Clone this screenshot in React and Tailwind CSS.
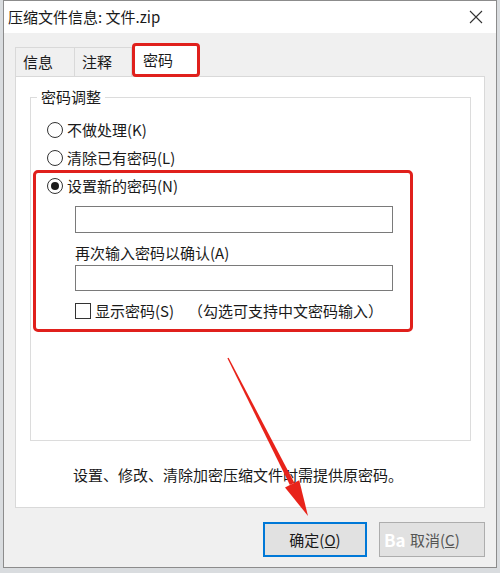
import React from "react";

const Radio = ({ checked, label }) => (
  <div className="flex items-center h-[20px]">
    <span className="w-[16px] h-[16px] rounded-full border border-[#333] bg-white flex items-center justify-center">
      {checked && <span className="w-[8px] h-[8px] rounded-full bg-[#1a1a1a]" />}
    </span>
    <span className="ml-[4px]">{label}</span>
  </div>
);

const App = () => {
  return (
    <div
      className="relative w-[500px] h-[573px] overflow-hidden bg-[#d9dcdf] text-[15px] leading-[20px] text-[#1a1a1a]"
      style={{ fontFamily: '"Noto Sans CJK SC", "Noto Sans", sans-serif' }}
    >
      {/* Window */}
      <div className="ml-[3px] w-[494px] h-[568px] border border-[#8c8c8c] bg-[#f0f0f0] flex flex-col">
        {/* Title bar */}
        <div className="h-[32px] bg-white flex items-center justify-between pl-[4px]">
          <span>压缩文件信息: 文件.zip</span>
          <svg className="mr-[13px]" width="14" height="14" viewBox="0 0 14 14">
            <path d="M1 1 L13 13 M13 1 L1 13" stroke="#333" strokeWidth="1.1" fill="none" />
          </svg>
        </div>

        <div className="px-[11px]">
          {/* Tabs */}
          <div className="mt-[10px] h-[33px] flex items-end">
            <div className="w-[60px] h-[29px] border border-b-0 border-[#d9d9d9] bg-[#f0f0f0] flex items-center pl-[7px]">
              信息
            </div>
            <div className="w-[57px] h-[29px] border border-l-0 border-b-0 border-[#d9d9d9] bg-[#f0f0f0] flex items-center pl-[7px]">
              注释
            </div>
            <div className="relative z-10 -mb-px w-[68px] h-[34px] border-[3px] border-[#e0201c] rounded-[4px] bg-white flex items-center pl-[8px]">
              密码
            </div>
          </div>

          {/* Panel */}
          <div className="w-[470px] h-[432px] border border-[#d9d9d9] bg-white">
            <fieldset className="ml-[14px] mt-[10px] w-[441px] h-[354px] border border-[#dcdcdc]">
              <legend className="ml-[6px] px-[4px]">密码调整</legend>
              <div className="ml-[16px] mt-[13px]">
                <Radio label="不做处理(K)" />
              </div>
              <div className="ml-[16px] mt-[8px]">
                <Radio label="清除已有密码(L)" />
              </div>

              {/* Highlighted section */}
              <div className="ml-[2px] mt-[2px] w-[380px] border-[3px] border-[#e0201c] rounded-[5px] pb-[8px]">
                <div className="ml-[11px] mt-[3px]">
                  <Radio checked label="设置新的密码(N)" />
                </div>
                <div className="ml-[39px] mt-[10px] w-[318px] h-[27px] border border-[#7a7a7a] bg-white" />
                <div className="ml-[39px] mt-[10px]">再次输入密码以确认(A)</div>
                <div className="ml-[39px] mt-[2px] w-[318px] h-[26px] border border-[#7a7a7a] bg-white" />
                <div className="ml-[39px] mt-[10px] flex items-center h-[20px]">
                  <span className="w-[16px] h-[16px] border border-[#333] bg-white" />
                  <span className="ml-[4px]">显示密码(S)</span>
                  <span className="ml-[14px]">（勾选可支持中文密码输入）</span>
                </div>
              </div>
            </fieldset>

            <div className="ml-[57px] mt-[24px]">设置、修改、清除加密压缩文件时需提供原密码。</div>
          </div>

          {/* Buttons */}
          <div className="mt-[14px] flex">
            <div className="ml-[248px] w-[105px] h-[35px] border-2 border-[#0078d7] bg-[#e1e1e1] flex items-center justify-center">
              确定(<span className="underline">O</span>)
            </div>
            <div className="ml-[12px] w-[107px] h-[35px] border border-[#adadad] bg-[#e1e1e1] flex items-center text-[#555]">
              <span className="ml-[4px] w-[24px] text-[17px] font-bold text-white">Ba</span>
              <span className="ml-[2px]">
                取消(<span className="underline">C</span>)
              </span>
            </div>
          </div>
        </div>
      </div>

      {/* Red arrow annotation */}
      <svg className="absolute left-0 top-0 pointer-events-none" width="500" height="573" viewBox="0 0 500 573">
        <polygon points="227.4,358.3 228.6,357.7 294.3,482.7 289.9,484.9" fill="#e8231a" />
        <polygon points="308,516 299.2,480.2 285,487.4" fill="#e8231a" />
      </svg>
    </div>
  );
};

export default App;
